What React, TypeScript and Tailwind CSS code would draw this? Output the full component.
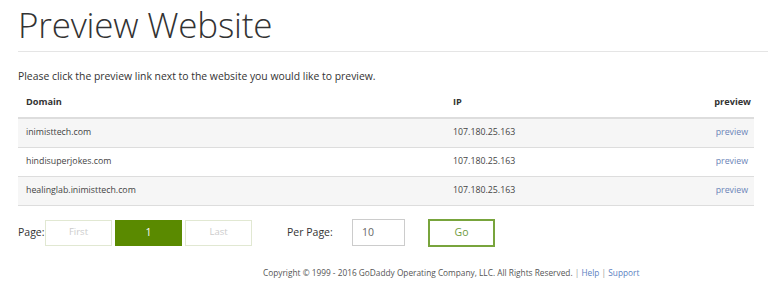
export default function App() {
  const rows = [
    { d: "inimisttech.com", ip: "107.180.25.163" },
    { d: "hindisuperjokes.com", ip: "107.180.25.163" },
    { d: "healinglab.inimisttech.com", ip: "107.180.25.163" },
  ];
  return (
    <div className="w-[768px] h-[292px] bg-white overflow-hidden text-[#333]" style={{ fontFamily: '"Open Sans", "Noto Sans", sans-serif' }}>
      <div className="pl-[18px]">
        <h1 className="text-[35px] font-light leading-[48px] pt-[1px] text-[#333] tracking-[-0.2px]">Preview Website</h1>
        <div className="h-px bg-[#e5e5e5] mt-[2px]" />
        <p className="text-[10.4px] mt-[16px] leading-[16px]">Please click the preview link next to the website you would like to preview.</p>
        <table className="w-[736px] mt-[2px] text-[8.8px] border-collapse text-[#444]">
          <thead>
            <tr className="border-b-2 border-[#ddd] text-[9.2px] text-[#333]">
              <th className="text-left font-bold pl-[8px] h-[32px]">Domain</th>
              <th className="text-left font-bold pl-[5px]">IP</th>
              <th className="text-right font-bold pr-[3px]">preview</th>
            </tr>
          </thead>
          <tbody>
            {rows.map((r, i) => (
              <tr key={i} className={`border-b border-[#ddd] h-[29px] ${i % 2 === 0 ? "bg-[#f6f6f6]" : "bg-white"}`}>
                <td className="pl-[8px] w-[430px]">{r.d}</td>
                <td className="pl-[5px]">{r.ip}</td>
                <td className="text-right pr-[6px] text-[#6b84b8]">preview</td>
              </tr>
            ))}
          </tbody>
        </table>
        <div className="flex items-center mt-[13px] text-[10.5px]">
          <span className="mr-[1px] w-[26px]">Page:</span>
          <div className="w-[67px] h-[26px] border border-[#e1e8d2] flex items-center justify-center text-[#ccc] text-[9.5px]">First</div>
          <div className="w-[67px] h-[26px] ml-[3px] bg-[#5a8a00] flex items-center justify-center text-white">1</div>
          <div className="w-[67px] h-[26px] ml-[3px] border border-[#e1e8d2] flex items-center justify-center text-[#ccc] text-[9.5px]">Last</div>
          <span className="ml-[35px] w-[65px]">Per Page:</span>
          <div className="w-[53px] h-[27px] border border-[#ccc] flex items-center pl-[9px] text-[#666]">10</div>
          <div className="ml-[23px] w-[67px] h-[28px] border-2 border-[#78a43c] flex items-center justify-center text-[#6f9a3e]">Go</div>
        </div>
        <p className="mt-[20px] text-[8.3px] text-[#555] pl-[245px]">
          Copyright © 1999 - 2016 GoDaddy Operating Company, LLC. All Rights Reserved. <span className="text-[#999]">|</span> <span className="text-[#5b7fbf]">Help</span> <span className="text-[#999]">|</span> <span className="text-[#5b7fbf]">Support</span>
        </p>
      </div>
    </div>
  );
}
